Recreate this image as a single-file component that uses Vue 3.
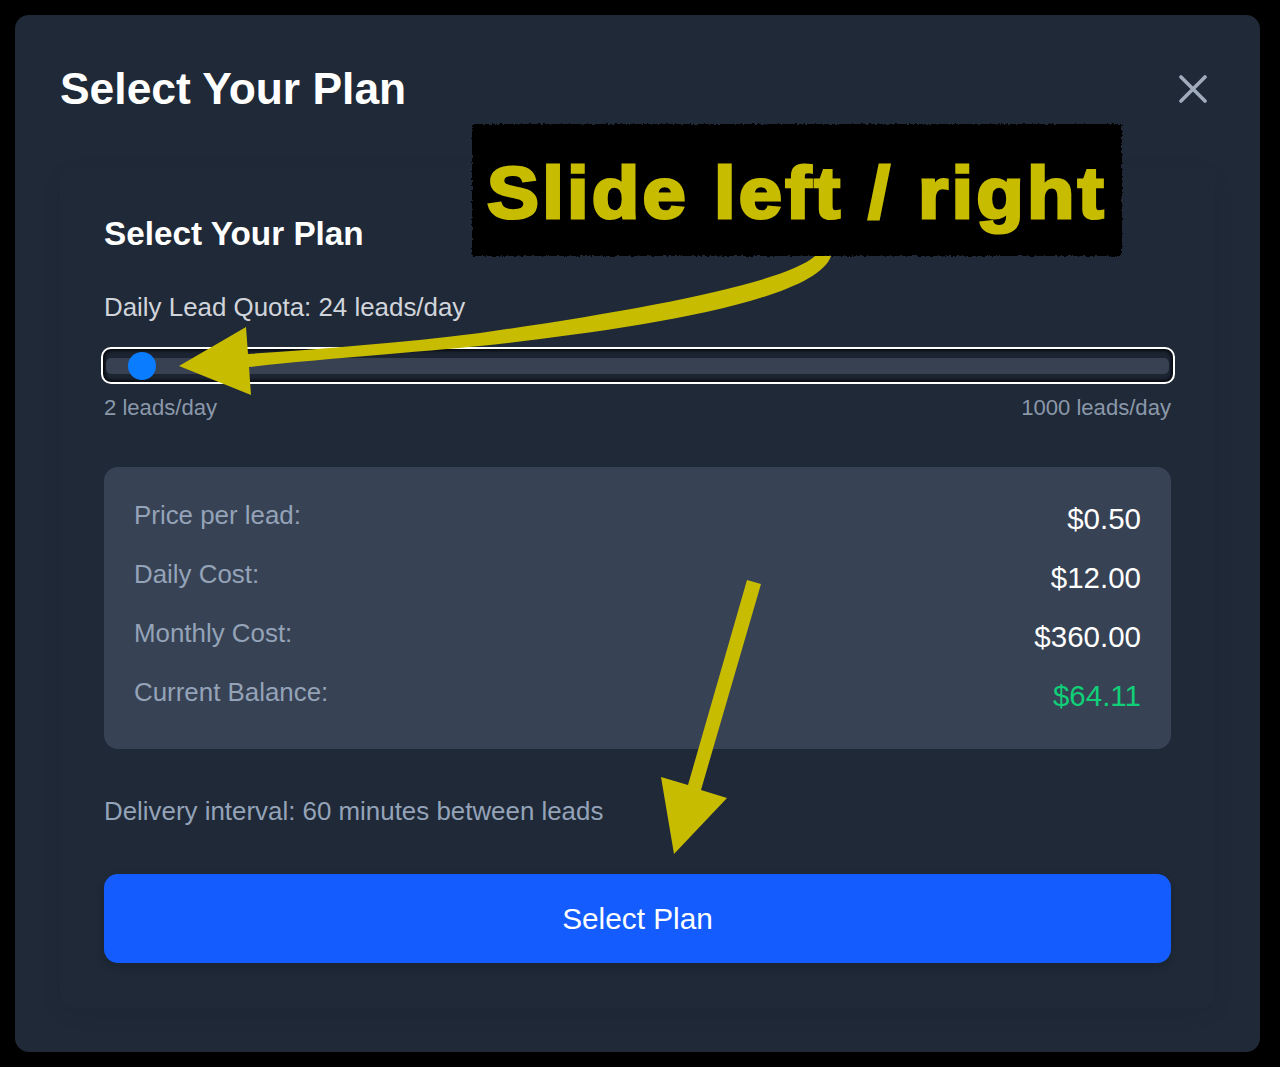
<script setup>
const rows = [
  { label: 'Price per lead:', value: '$0.50' },
  { label: 'Daily Cost:', value: '$12.00' },
  { label: 'Monthly Cost:', value: '$360.00' },
  { label: 'Current Balance:', value: '$64.11', green: true },
]
</script>

<template>
  <div class="page">
    <div class="modal">
      <header class="head">
        <h1 class="title">Select Your Plan</h1>
        <button class="close" aria-label="Close">
          <svg width="28" height="28" viewBox="0 0 28 28" fill="none" stroke="#a0acbc" stroke-width="3.6" stroke-linecap="round">
            <path d="M2 2 L26 26 M26 2 L2 26" />
          </svg>
        </button>
      </header>
      <section class="card">
        <h2 class="sub">Select Your Plan</h2>
        <div class="quota">Daily Lead Quota: 24 leads/day</div>
        <div class="slider">
          <div class="track"><span class="thumb"></span></div>
        </div>
        <div class="range"><span>2 leads/day</span><span>1000 leads/day</span></div>
        <div class="panel">
          <div v-for="r in rows" :key="r.label" class="row">
            <span class="label">{{ r.label }}</span>
            <span class="value" :class="{ green: r.green }">{{ r.value }}</span>
          </div>
        </div>
        <div class="interval">Delivery interval: 60 minutes between leads</div>
        <button class="cta">Select Plan</button>
      </section>
    </div>

    <div class="note"><span class="note-bg"></span><span class="note-text">Slide left / right</span></div>
    <svg class="arrows" width="1280" height="1067" viewBox="0 0 1280 1067">
      <defs>
        <filter id="rough" x="-2%" y="-5%" width="104%" height="110%">
          <feTurbulence type="fractalNoise" baseFrequency="0.35" numOctaves="2" seed="4" />
          <feDisplacementMap in="SourceGraphic" scale="4" />
        </filter>
      </defs>
      <path d="M815 256 C 785 283 640 310 480 333 C 400 343 320 349 248 354 L 246 327 L 179 366 L 251 395 L 249 367 C 330 358 420 352 480 346 C 610 332 815 304 831 256 Z" fill="#c8bc00" />
      <path d="M747 580 L 761 584 L 701 790 L 727 798 L 674 854 L 661 777 L 688 785 Z" fill="#c8bc00" />
    </svg>
  </div>
</template>

<style>
html, body { margin: 0; background: #000; }
</style>

<style scoped>
.page {
  position: relative;
  width: 1280px;
  height: 1067px;
  padding: 15px 20px 15px 15px;
  box-sizing: border-box;
  background: #000;
  font-family: "Liberation Sans", Arial, sans-serif;
  overflow: hidden;
}
.modal {
  height: 1037px;
  background: #1f2937;
  border-radius: 14px;
  padding: 45px 45px 0;
  box-sizing: border-box;
}
.head {
  display: flex;
  justify-content: space-between;
  align-items: center;
  height: 58px;
}
.title {
  margin: 0;
  font-size: 44.4px;
  line-height: 58px;
  font-weight: 700;
  color: #fff;
}
.close {
  background: none;
  border: 0;
  padding: 0;
  margin-right: 8px;
  display: flex;
}
.card {
  margin-top: 50px;
  padding: 46px 44px 0;
  height: 840px;
  box-sizing: border-box;
  border-radius: 14px;
  box-shadow: 0 6px 24px rgba(0, 0, 0, 0.05);
}
.sub {
  margin: 0;
  font-size: 33.3px;
  line-height: 40px;
  font-weight: 700;
  color: #fff;
}
.quota {
  margin-top: 35px;
  font-size: 25.9px;
  line-height: 36px;
  color: #d1d5db;
}
.slider {
  margin: 22px -3.5px 0;
  height: 37px;
  box-sizing: border-box;
  border: 2.5px solid #fff;
  border-radius: 10px;
  background: #1c2431;
  box-shadow: inset 0 0 3px 2px #070a10;
  display: flex;
  align-items: center;
  padding: 0 3.5px;
}
.track {
  flex: 1;
  height: 16px;
  border-radius: 5px;
  background: #374151;
  position: relative;
}
.thumb {
  position: absolute;
  left: 21.5px;
  top: -6px;
  width: 28px;
  height: 28px;
  border-radius: 50%;
  background: #0a7cff;
}
.range {
  margin-top: 9px;
  display: flex;
  justify-content: space-between;
  font-size: 22.1px;
  line-height: 30px;
  color: #8b98aa;
}
.panel {
  margin-top: 44px;
  background: #374254;
  border-radius: 14px;
  padding: 28.5px 30px 0;
  height: 282px;
  box-sizing: border-box;
}
.row {
  height: 59.3px;
  display: flex;
  justify-content: space-between;
}
.label {
  font-size: 25.9px;
  line-height: 38px;
  color: #94a3b8;
}
.value {
  font-size: 29.5px;
  line-height: 46px;
  color: #fff;
}
.value.green { color: #10cf78; }
.interval {
  margin-top: 44px;
  font-size: 25.9px;
  line-height: 36px;
  color: #94a3b8;
}
.cta {
  display: block;
  width: 100%;
  margin-top: 45px;
  height: 89px;
  border: 0;
  border-radius: 14px;
  background: #155cff;
  color: #fff;
  font-family: inherit;
  font-size: 29.8px;
  box-shadow: 0 4px 10px rgba(0, 0, 0, 0.15);
}
.note {
  position: absolute;
  left: 472px;
  top: 124px;
  width: 650px;
  height: 132px;
}
.note-bg {
  position: absolute;
  inset: 0;
  background: #000;
  filter: url(#rough);
}
.note-text {
  position: absolute;
  inset: 0;
  color: #c8bc00;
  font-size: 72px;
  font-weight: 700;
  line-height: 138px;
  text-align: center;
  letter-spacing: 3px;
  -webkit-text-stroke: 3px #c8bc00;
  white-space: nowrap;
  transform: scaleX(1.08);
}
.arrows {
  position: absolute;
  left: 0;
  top: 0;
  pointer-events: none;
}
</style>
